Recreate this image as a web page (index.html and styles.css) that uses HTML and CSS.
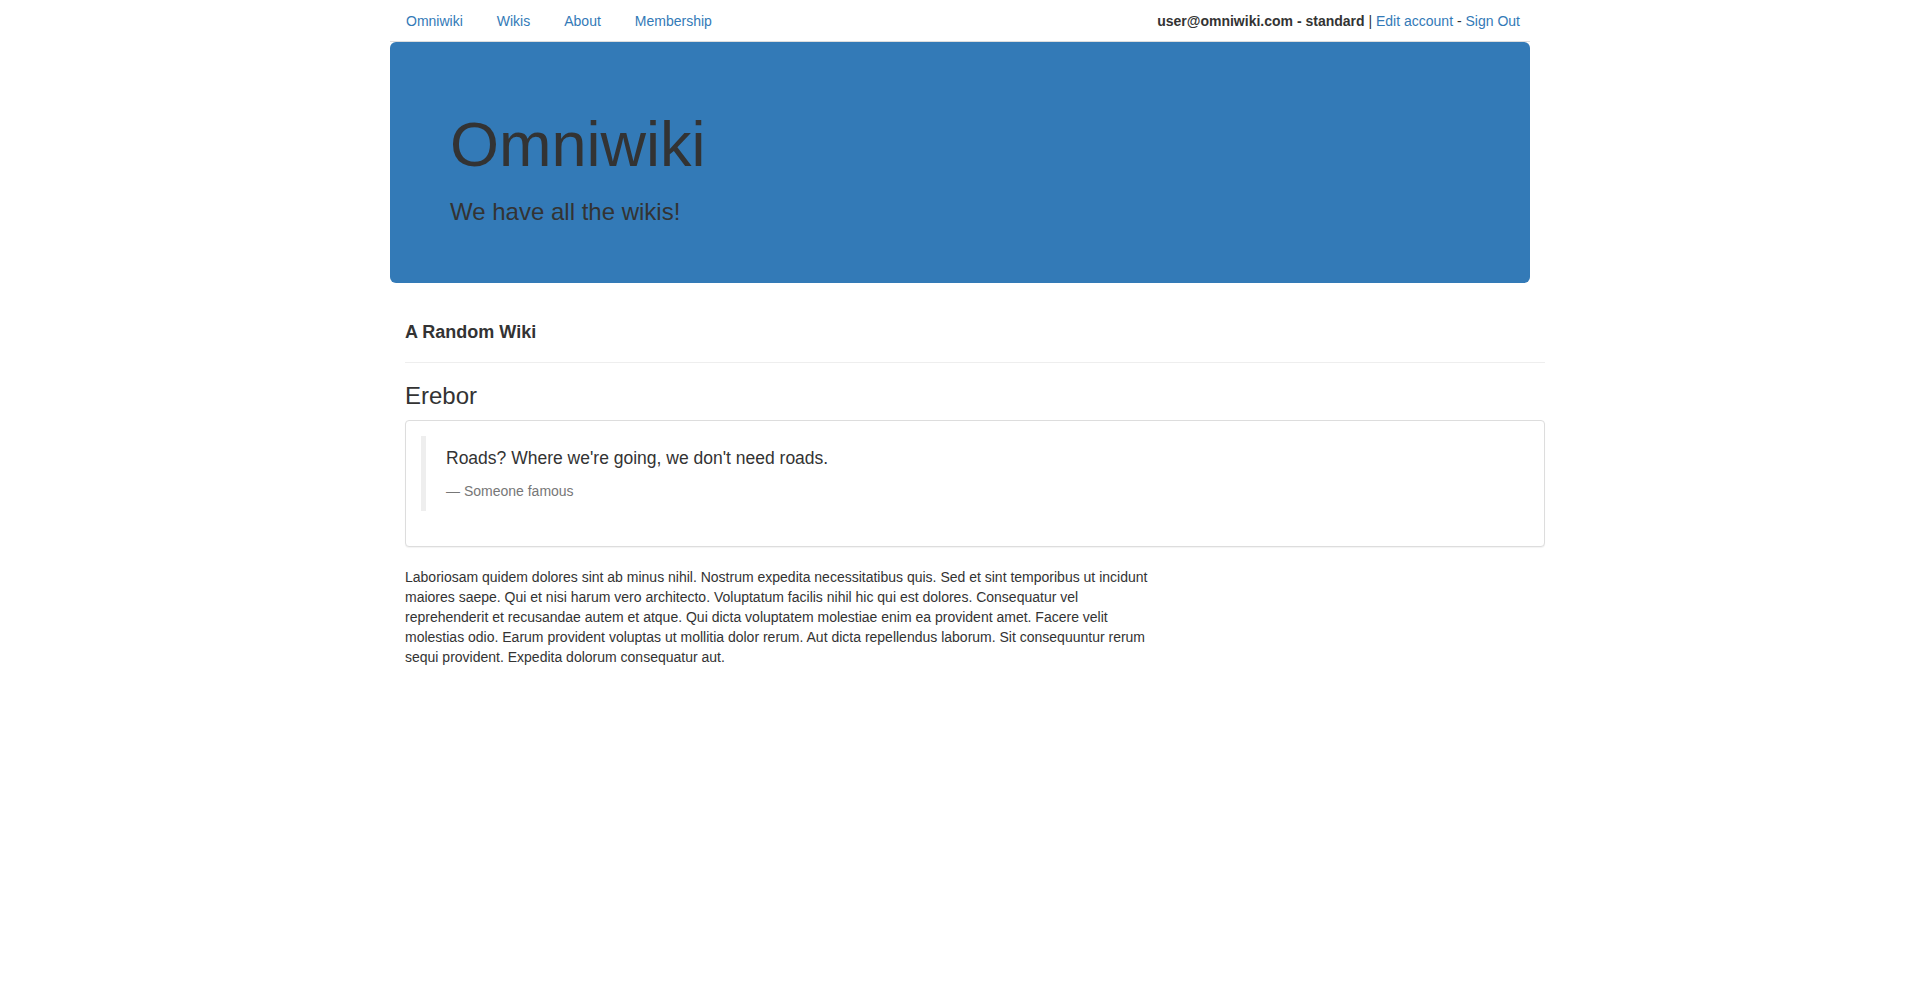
FILE: index.html
```html
<!DOCTYPE html>
<html lang="en">
<head>
<meta charset="utf-8">
<title>Omniwiki</title>
<link rel="stylesheet" href="styles.css">
</head>
<body>
<div class="page">
  <nav class="topnav">
    <ul class="tabs">
      <li class="tab"><a href="#">Omniwiki</a></li>
      <li class="tab"><a href="#">Wikis</a></li>
      <li class="tab"><a href="#">About</a></li>
      <li class="tab"><a href="#">Membership</a></li>
      <li class="account"><strong>user@omniwiki.com - standard</strong> | <a href="#">Edit account</a> - <a href="#">Sign Out</a></li>
    </ul>
  </nav>
  <header class="hero">
    <h1 class="hero-title">Omniwiki</h1>
    <h3 class="hero-sub">We have all the wikis!</h3>
  </header>
  <main class="content">
    <h4 class="section-title">A Random Wiki</h4>
    <hr class="divider">
    <h3 class="wiki-name">Erebor</h3>
    <div class="panel">
      <div class="panel-body">
        <blockquote class="quote">
          <p>Roads? Where we're going, we don't need roads.</p>
          <footer>Someone famous</footer>
        </blockquote>
      </div>
    </div>
    <div class="text-col">
      <p>Laboriosam quidem dolores sint ab minus nihil. Nostrum expedita necessitatibus quis. Sed et sint temporibus ut incidunt maiores saepe. Qui et nisi harum vero architecto. Voluptatum facilis nihil hic qui est dolores. Consequatur vel reprehenderit et recusandae autem et atque. Qui dicta voluptatem molestiae enim ea provident amet. Facere velit molestias odio. Earum provident voluptas ut mollitia dolor rerum. Aut dicta repellendus laborum. Sit consequuntur rerum sequi provident. Expedita dolorum consequatur aut.</p>
    </div>
  </main>
</div>
</body>
</html>
```
FILE: styles.css
```css
* { box-sizing: border-box; }
html, body { margin: 0; padding: 0; }
body {
  font-family: "Liberation Sans", Arial, sans-serif;
  font-size: 14px;
  line-height: 1.42857143;
  color: #333;
  background: #fff;
}
a { color: #337ab7; text-decoration: none; }

.page {
  width: 1140px;
  margin: 0 auto;
}

/* top tabs */
.tabs {
  list-style: none;
  margin: 0;
  padding: 0;
  display: flex;
  align-items: flex-start;
  border-bottom: 1px solid #ddd;
}
.tab { margin-bottom: -1px; }
.tab a {
  display: block;
  padding: 10px 15px;
  margin-right: 2px;
  border: 1px solid transparent;
  border-radius: 4px 4px 0 0;
  line-height: 1.42857143;
}
.account {
  margin-left: auto;
  padding: 11px 10px 10px 0;
  line-height: 1.42857143;
}
.account strong { font-weight: bold; color: #333; }

/* jumbotron */
.hero {
  background: #337ab7;
  border-radius: 6px;
  padding: 48px 60px 47px;
  margin-bottom: 30px;
  display: flow-root;
}
.hero-title {
  font-size: 63px;
  font-weight: 500;
  line-height: 1.1;
  margin: 20px 0 20px;
}
.hero-sub {
  font-size: 24px;
  font-weight: 500;
  line-height: 1.1;
  margin: 0 0 10px;
}

/* content */
.content {
  width: 1140px;
  margin-left: 15px;
  padding-top: 10px;
}
.section-title {
  font-size: 18px;
  font-weight: bold;
  line-height: 1.1;
  margin: 0 0 20px;
}
.divider {
  border: 0;
  border-top: 1px solid #eee;
  margin: 0 0 20px;
  height: 0;
}
.wiki-name {
  font-size: 24px;
  font-weight: 500;
  line-height: 1.1;
  margin: 0 0 10px;
}
.panel {
  border: 1px solid #ddd;
  border-radius: 4px;
  margin-bottom: 20px;
  background: #fff;
  box-shadow: 0 1px 1px rgba(0,0,0,.05);
}
.panel-body { padding: 15px; }
.quote {
  margin: 0 0 20px;
  padding: 10px 20px;
  border-left: 5px solid #eee;
  font-size: 17.5px;
}
.quote p { margin: 0 0 10px; }
.quote footer {
  display: block;
  font-size: 80%;
  line-height: 1.42857143;
  color: #777;
}
.quote footer::before { content: "\2014 \00A0"; }

.text-col { width: 750px; }
.text-col p { margin: 0 0 10px; }
```
